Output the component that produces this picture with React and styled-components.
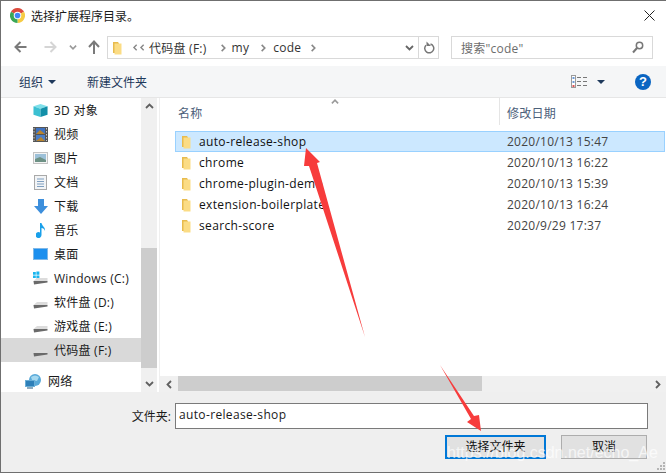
import React from 'react'
import styled, { createGlobalStyle } from 'styled-components'

const FONT = `"Open Sans", "Noto Sans CJK SC", sans-serif`

const Global = createGlobalStyle`
  html, body { margin: 0; padding: 0; background: #fff; }
  * { box-sizing: border-box; }
`

const Window = styled.div`
  position: relative;
  width: 666px;
  height: 473px;
  overflow: hidden;
  display: flex;
  flex-direction: column;
  background: #fff;
  border-top: 1px solid #6f6f6f;
  border-left: 1px solid #6f6f6f;
  border-bottom: 1px solid #6f6f6f;
  font-family: ${FONT};
  font-size: 12px;
  letter-spacing: 0.25px;
  color: #1a1a1a;
`

const EdgeAccent = styled.div`
  position: absolute;
  left: -1px;
  top: 65px;
  width: 1px;
  height: 62px;
  background: #2b3f68;
`

const TitleBar = styled.div`
  height: 31px;
  flex: none;
  display: flex;
  align-items: center;
  padding: 0 11px 2px 9px;
  gap: 6px;
`

const Title = styled.div`
  flex: 1;
  font-size: 12px;
  letter-spacing: 0;
`

const NavBar = styled.div`
  height: 34px;
  flex: none;
  display: flex;
  align-items: flex-start;
  padding-top: 4px;
`

const NavIcon = styled.div`
  width: ${({ $w }) => $w}px;
  height: 22px;
  flex: none;
  display: flex;
  align-items: center;
  justify-content: center;
`

const Field = styled.div`
  height: 23px;
  flex: none;
  border: 1px solid #d9d9d9;
  display: flex;
  align-items: center;
  background: #fff;
`

const AddressBox = styled(Field)`
  width: 332px;
  margin-left: 4px;
  padding-left: 4px;
`

const Crumb = styled.span`
  margin-left: ${({ $ml }) => $ml}px;
  color: #333;
  white-space: nowrap;
`

const CrumbArrow = styled.div`
  margin-left: ${({ $ml }) => $ml}px;
  display: flex;
`

const AddressEnd = styled.div`
  margin-left: auto;
  display: flex;
  align-items: center;
  height: 100%;
`

const Refresh = styled.div`
  width: 20px;
  height: 100%;
  margin-left: 4px;
  border-left: 1px solid #d9d9d9;
  display: flex;
  align-items: center;
  justify-content: center;
`

const SearchBox = styled(Field)`
  width: 202px;
  margin-left: 12px;
  padding: 0 8px 0 9px;
  color: #6d6d6d;
  justify-content: space-between;
`

const Toolbar = styled.div`
  height: 32px;
  flex: none;
  display: flex;
  align-items: center;
  background: #f5f6f7;
  border-bottom: 1px solid #e6e6e6;
  color: #1e395b;
  padding-left: 18px;
`

const ToolLabel = styled.span`
  white-space: nowrap;
  letter-spacing: 0;
`

const Caret = styled.div`
  width: 0;
  height: 0;
  border-left: 4px solid transparent;
  border-right: 4px solid transparent;
  border-top: 4px solid #1e395b;
  margin-left: ${({ $ml }) => $ml}px;
`

const NewFolder = styled(ToolLabel)`
  margin-left: 31px;
`

const ViewIcon = styled.div`
  margin-left: auto;
  display: flex;
`

const Help = styled.div`
  width: 16px;
  height: 16px;
  border-radius: 50%;
  background: #0a65c2;
  color: #fff;
  font: bold 13px/16px "Liberation Sans", sans-serif;
  text-align: center;
  margin: 0 15px 0 30px;
`

const Main = styled.div`
  height: 294px;
  flex: none;
  display: flex;
`

const Sidebar = styled.div`
  width: 140px;
  flex: none;
  overflow: hidden;
`

const NavItem = styled.div`
  height: 24px;
  display: flex;
  align-items: center;
  gap: 6px;
  padding-left: ${({ $top }) => ($top ? 24 : 32)}px;
  margin-top: ${({ $top }) => ($top ? 7 : 0)}px;
  background: ${({ $active }) => ($active ? '#d9d9d9' : 'transparent')};
  white-space: nowrap;
`

const PlaceIcon = styled.div`
  width: 15px;
  flex: none;
  display: flex;
  justify-content: center;
`

const VScroll = styled.div`
  width: 16px;
  flex: none;
  background: #f0f0f0;
  display: flex;
  flex-direction: column;
`

const ScrollBtn = styled.div`
  height: 17px;
  flex: none;
  display: flex;
  align-items: center;
  justify-content: center;
`

const VTrack = styled.div`
  flex: 1;
  padding-top: 133px;
`

const VThumb = styled.div`
  height: 120px;
  background: #cdcdcd;
`

const Content = styled.div`
  flex: 1;
  margin-left: 2px;
  border-left: 1px solid #efefef;
  display: flex;
  flex-direction: column;
  min-width: 0;
`

const ColumnHead = styled.div`
  position: relative;
  height: 27px;
  flex: none;
  display: flex;
  color: #4c607a;
`

const HeadCell = styled.div`
  width: ${({ $w }) => $w}px;
  padding: 6px 0 0 ${({ $pl }) => $pl}px;
  border-right: ${({ $line }) => ($line ? '1px solid #e5e5e5' : 'none')};
`

const SortMark = styled.div`
  position: absolute;
  left: 171px;
  top: 0;
  display: flex;
`

const List = styled.div`
  flex: 1;
  padding: 6px 0 0 15px;
`

const Row = styled.div`
  height: 21px;
  display: grid;
  grid-template-columns: 16px 310px 1fr;
  align-items: center;
  padding-left: 5px;
  border: 1px solid ${({ $selected }) => ($selected ? '#99d1ff' : 'transparent')};
  background: ${({ $selected }) => ($selected ? '#cce8ff' : 'transparent')};
  margin-right: 1px;
`

const RowName = styled.span`
  margin-left: 2px;
  white-space: nowrap;
  letter-spacing: 0.35px;
  color: #111;
`

const RowDate = styled.span`
  color: #444;
  white-space: nowrap;
`

const HScroll = styled.div`
  height: 16px;
  flex: none;
  background: #f0f0f0;
  display: flex;
`

const HBtn = styled.div`
  width: ${({ $w }) => $w}px;
  flex: none;
  display: flex;
  align-items: center;
  justify-content: center;
`

const HThumb = styled.div`
  width: 304px;
  height: 15px;
  background: #cdcdcd;
`

const HTrack = styled.div`
  flex: 1;
`

const Footer = styled.div`
  flex: 1;
  background: #efefef;
  display: flex;
  flex-direction: column;
  padding-top: 11px;
`

const FormRow = styled.div`
  display: flex;
  align-items: center;
  height: 26px;
`

const FormLabel = styled.label`
  width: 174px;
  flex: none;
  padding-right: 4px;
  text-align: right;
  letter-spacing: 0;
`

const NameInput = styled.div`
  width: 473px;
  height: 26px;
  border: 1px solid #7a7a7a;
  background: #fff;
  padding-left: 3px;
  line-height: 22px;
  letter-spacing: 0.35px;
`

const Buttons = styled.div`
  display: flex;
  gap: 15px;
  margin: 6px 0 0 444px;
`

const Button = styled.div`
  height: 24px;
  width: ${({ $w }) => $w}px;
  background: #e1e1e1;
  border: ${({ $primary }) => ($primary ? '2px solid #0078d7' : '1px solid #adadad')};
  display: flex;
  align-items: center;
  justify-content: center;
  padding-bottom: 2px;
  letter-spacing: 0;
  color: #111;
`

const Overlay = styled.svg`
  position: absolute;
  left: -1px;
  top: -1px;
  pointer-events: none;
`

const Watermark = styled.div`
  position: absolute;
  left: 446px;
  top: 443px;
  font: 16px "Liberation Sans", sans-serif;
  letter-spacing: 0;
  color: rgba(255, 255, 255, 0.7);
  white-space: nowrap;
`

const Grip = styled.svg`
  position: absolute;
  right: 0;
  bottom: 0;
`

const Chrome = () => (
  <svg width="15" height="15" viewBox="0 0 16 16">
    <path d="M8 8 L1.07 4 A8 8 0 0 1 14.93 4 Z" fill="#dc4a3d" />
    <path d="M8 8 L14.93 4 A8 8 0 0 1 8 16 Z" fill="#f6cb43" />
    <path d="M8 8 L8 16 A8 8 0 0 1 1.07 4 Z" fill="#3aa757" />
    <circle cx="8" cy="8" r="4" fill="#fff" />
    <circle cx="8" cy="8" r="3" fill="#4285f4" />
  </svg>
)

const Folder = ({ w = 10, h = 14 }) => (
  <svg width={w} height={h} viewBox="0 0 10 14">
    <path d="M1 1 H6 L7 2.5 V12 H1 Z" fill="#e8bb4e" />
    <path d="M2.5 2.5 H9.5 V13.5 H2.5 Z" fill="#fbdc85" />
  </svg>
)

const Chevron = ({ dir = 'down', color = '#555', size = 9 }) => {
  const d = {
    up: 'M1 6 L4.5 2.5 L8 6',
    down: 'M1 3 L4.5 6.5 L8 3',
    left: 'M6 1 L2.5 4.5 L6 8',
    right: 'M3 1 L6.5 4.5 L3 8',
  }[dir]
  return (
    <svg width={size} height={size} viewBox="0 0 9 9">
      <path d={d} fill="none" stroke={color} strokeWidth="1.8" />
    </svg>
  )
}

const LeftArrow = ({ color }) => (
  <svg width="13" height="12" viewBox="0 0 13 12">
    <path d="M12.5 6 H2 M6.5 1 L1.5 6 L6.5 11" fill="none" stroke={color} strokeWidth="2" />
  </svg>
)

const RightArrow = ({ color }) => (
  <svg width="13" height="12" viewBox="0 0 13 12">
    <path d="M0.5 6 H11 M6.5 1 L11.5 6 L6.5 11" fill="none" stroke={color} strokeWidth="2" />
  </svg>
)

const UpArrow = () => (
  <svg width="12" height="14" viewBox="0 0 12 14">
    <path d="M6 14 V2 M1 7 L6 1.5 L11 7" fill="none" stroke="#7a7a7a" strokeWidth="2" />
  </svg>
)

const RefreshIcon = () => (
  <svg width="12" height="13" viewBox="0 0 12 13">
    <path d="M7.5 3 A4.5 4.5 0 1 1 3 4.2" fill="none" stroke="#777" strokeWidth="1.5" />
    <path d="M3.5 0.5 V5 H8 Z" fill="#777" />
  </svg>
)

const SearchIcon = () => (
  <svg width="12" height="13" viewBox="0 0 12 13">
    <circle cx="7.5" cy="4.5" r="3.2" fill="none" stroke="#777" strokeWidth="1.5" />
    <path d="M5 7 L1 11.5" stroke="#777" strokeWidth="2" />
  </svg>
)

const Close = () => (
  <svg width="11" height="11" viewBox="0 0 11 11">
    <path d="M0.5 0.5 L10.5 10.5 M10.5 0.5 L0.5 10.5" stroke="#222" strokeWidth="1" />
  </svg>
)

const ViewsIcon = () => (
  <svg width="17" height="13" viewBox="0 0 17 13">
    <rect x="0.5" y="0.5" width="4" height="12" fill="#fff" stroke="#9a9a9a" />
    <rect x="1.5" y="2" width="2" height="2" fill="#6c9ad6" />
    <rect x="1.5" y="6" width="2" height="2" fill="#6c9ad6" />
    <rect x="1.5" y="10" width="2" height="2" fill="#d55" />
    <path d="M6 2.5 H10 M12 2.5 H16 M6 6.5 H10 M12 6.5 H16 M6 10.5 H10 M12 10.5 H16" stroke="#777" />
  </svg>
)

const Cube = () => (
  <svg width="16" height="15" viewBox="0 0 16 15">
    <path d="M8 0.5 L15.5 3 L8 5.5 L0.5 3 Z" fill="#7fe0ea" />
    <path d="M0.5 3 L8 5.5 V14.5 L0.5 12 Z" fill="#3cc0d2" />
    <path d="M15.5 3 L8 5.5 V14.5 L15.5 12 Z" fill="#128fa8" />
  </svg>
)

const Film = () => (
  <svg width="15" height="15" viewBox="0 0 15 15">
    <rect width="15" height="15" fill="#555" />
    <rect x="3" y="1" width="9" height="6" fill="#3f72c0" />
    <rect x="3" y="8" width="9" height="6" fill="#4a7ec8" />
    <path d="M3 7 L7 3 L12 7 Z M3 14 L8 10 L12 14 Z" fill="#b8842e" />
    <path d="M1 1 V14 M13.5 1 V14" stroke="#ccc" strokeDasharray="1.5 1.5" />
  </svg>
)

const Picture = () => (
  <svg width="15" height="12" viewBox="0 0 15 12">
    <rect x="0.5" y="0.5" width="14" height="11" fill="#f4f4f4" stroke="#c3c3c3" />
    <rect x="2" y="2" width="11" height="8" fill="#9cc0d8" />
    <path d="M2 7 L7 5 L13 8 V10 H2 Z" fill="#6d9185" />
  </svg>
)

const Doc = () => (
  <svg width="13" height="15" viewBox="0 0 13 15">
    <rect x="0.5" y="0.5" width="12" height="14" fill="#f2f4f6" stroke="#a9a9a9" />
    <path d="M3 4 H10 M3 6.5 H10 M3 9 H10 M3 11.5 H10" stroke="#7f9fc0" />
  </svg>
)

const Download = () => (
  <svg width="14" height="15" viewBox="0 0 14 15">
    <path d="M4 0 H10 V7 H14 L7 15 L0 7 H4 Z" fill="#3d8fdc" />
  </svg>
)

const Music = () => (
  <svg width="10" height="15" viewBox="0 0 10 15">
    <path d="M4 0 H5.5 C6 3 9.5 4 9 8 C8.5 6 7 5 5.5 5 V12 A3 3 0 1 1 4 9.5 Z" fill="#19a0ea" />
  </svg>
)

const Desktop = () => (
  <svg width="15" height="12" viewBox="0 0 15 12">
    <rect width="15" height="12" fill="#7fb8e8" />
    <rect x="1" y="1" width="13" height="10" fill="#1c8fee" />
  </svg>
)

const Drive = ({ win }) => (
  <svg width="15" height="14" viewBox="0 0 15 14">
    {win && <path d="M0 1 H2.8 V3.8 H0 Z M3.4 0.6 H6.4 V3.8 H3.4 Z M0 4.4 H2.8 V7 H0 Z M3.4 4.4 H6.4 V7.4 H3.4 Z" fill="#19b5ee" />}
    <path d="M0.5 10 L4 7 H14.5 V10 L4 12 Z" fill="#dcdcdc" />
    <path d="M0.5 10 L14.5 10 V11.5 L1 13.5 Z" fill="#6a6a6a" />
  </svg>
)

const Network = () => (
  <svg width="17" height="15" viewBox="0 0 17 15">
    <circle cx="10" cy="6" r="6" fill="#58a9d8" />
    <path d="M6 3 Q10 0 14 3 L12 7 L7 6 Z" fill="#a5d8ef" />
    <rect x="0.5" y="6.5" width="9" height="6" fill="#2d7fb8" stroke="#6aaed6" />
    <path d="M2 14 H8" stroke="#6a8fa8" strokeWidth="1.5" />
  </svg>
)

const places = [
  { name: '3D 对象', icon: <Cube /> },
  { name: '视频', icon: <Film /> },
  { name: '图片', icon: <Picture /> },
  { name: '文档', icon: <Doc /> },
  { name: '下载', icon: <Download /> },
  { name: '音乐', icon: <Music /> },
  { name: '桌面', icon: <Desktop /> },
  { name: 'Windows (C:)', icon: <Drive win /> },
  { name: '软件盘 (D:)', icon: <Drive /> },
  { name: '游戏盘 (E:)', icon: <Drive /> },
  { name: '代码盘 (F:)', icon: <Drive />, active: true },
]

const folders = [
  { name: 'auto-release-shop', date: '2020/10/13 15:47', selected: true },
  { name: 'chrome', date: '2020/10/13 16:22' },
  { name: 'chrome-plugin-demo', date: '2020/10/13 15:39' },
  { name: 'extension-boilerplate', date: '2020/10/13 16:24' },
  { name: 'search-score', date: '2020/9/29 17:37' },
]

export default function App() {
  return (
    <>
      <Global />
      <Window>
        <EdgeAccent />
        <TitleBar>
          <Chrome />
          <Title>选择扩展程序目录。</Title>
          <Close />
        </TitleBar>

        <NavBar>
          <NavIcon $w={38}><LeftArrow color="#7a7a7a" /></NavIcon>
          <NavIcon $w={22}><RightArrow color="#d5d5d5" /></NavIcon>
          <NavIcon $w={24}><Chevron color="#999" size={8} /></NavIcon>
          <NavIcon $w={18}><UpArrow /></NavIcon>
          <AddressBox>
            <Folder />
            <CrumbArrow $ml={10}><Chevron dir="left" color="#888" size={7} /><Chevron dir="left" color="#888" size={7} /></CrumbArrow>
            <Crumb $ml={3}>代码盘 (F:)</Crumb>
            <CrumbArrow $ml={12}><Chevron dir="right" color="#888" size={8} /></CrumbArrow>
            <Crumb $ml={5}>my</Crumb>
            <CrumbArrow $ml={10}><Chevron dir="right" color="#888" size={8} /></CrumbArrow>
            <Crumb $ml={6}>code</Crumb>
            <CrumbArrow $ml={8}><Chevron dir="right" color="#888" size={8} /></CrumbArrow>
            <AddressEnd>
              <Chevron color="#666" />
              <Refresh><RefreshIcon /></Refresh>
            </AddressEnd>
          </AddressBox>
          <SearchBox>
            <span>搜索"code"</span>
            <SearchIcon />
          </SearchBox>
        </NavBar>

        <Toolbar>
          <ToolLabel>组织</ToolLabel>
          <Caret $ml={5} />
          <NewFolder>新建文件夹</NewFolder>
          <ViewIcon><ViewsIcon /></ViewIcon>
          <Caret $ml={9} />
          <Help>?</Help>
        </Toolbar>

        <Main>
          <Sidebar>
            {places.map((p) => (
              <NavItem key={p.name} $active={p.active}>
                <PlaceIcon>{p.icon}</PlaceIcon>
                <span>{p.name}</span>
              </NavItem>
            ))}
            <NavItem $top>
              <Network />
              <span>网络</span>
            </NavItem>
          </Sidebar>
          <VScroll>
            <ScrollBtn><Chevron dir="up" color="#606060" /></ScrollBtn>
            <VTrack><VThumb /></VTrack>
            <ScrollBtn><Chevron color="#606060" /></ScrollBtn>
          </VScroll>
          <Content>
            <ColumnHead>
              <SortMark><Chevron dir="up" color="#9a9a9a" size={8} /></SortMark>
              <HeadCell $w={340} $pl={18} $line>名称</HeadCell>
              <HeadCell $pl={7}>修改日期</HeadCell>
            </ColumnHead>
            <List>
              {folders.map((f) => (
                <Row key={f.name} $selected={f.selected}>
                  <Folder />
                  <RowName>{f.name}</RowName>
                  <RowDate>{f.date}</RowDate>
                </Row>
              ))}
            </List>
            <HScroll>
              <HBtn $w={18}><Chevron dir="left" color="#606060" /></HBtn>
              <HThumb />
              <HTrack />
              <HBtn $w={17}><Chevron dir="right" color="#606060" /></HBtn>
            </HScroll>
          </Content>
        </Main>

        <Footer>
          <FormRow>
            <FormLabel>文件夹:</FormLabel>
            <NameInput>auto-release-shop</NameInput>
          </FormRow>
          <Buttons>
            <Button $primary $w={101}>选择文件夹</Button>
            <Button $w={86}>取消</Button>
          </Buttons>
        </Footer>

        <Overlay width="666" height="473" viewBox="0 0 666 473">
          <polygon points="306,148 320,162 317,163 365,337 309,166 304,166" fill="#f73c3c" />
          <polygon points="440,365 474,416 479,415 481,431 467,422 471,419" fill="#f73c3c" />
        </Overlay>
        <Watermark>https://blog.csdn.net/echo_Ae</Watermark>
        <Grip width="11" height="11" viewBox="0 0 11 11">
          <path d="M8 1 h2 v2 h-2 z M5 4 h2 v2 h-2 z M8 4 h2 v2 h-2 z M2 7 h2 v2 h-2 z M5 7 h2 v2 h-2 z M8 7 h2 v2 h-2 z" fill="#b5b5b5" />
        </Grip>
      </Window>
    </>
  )
}
